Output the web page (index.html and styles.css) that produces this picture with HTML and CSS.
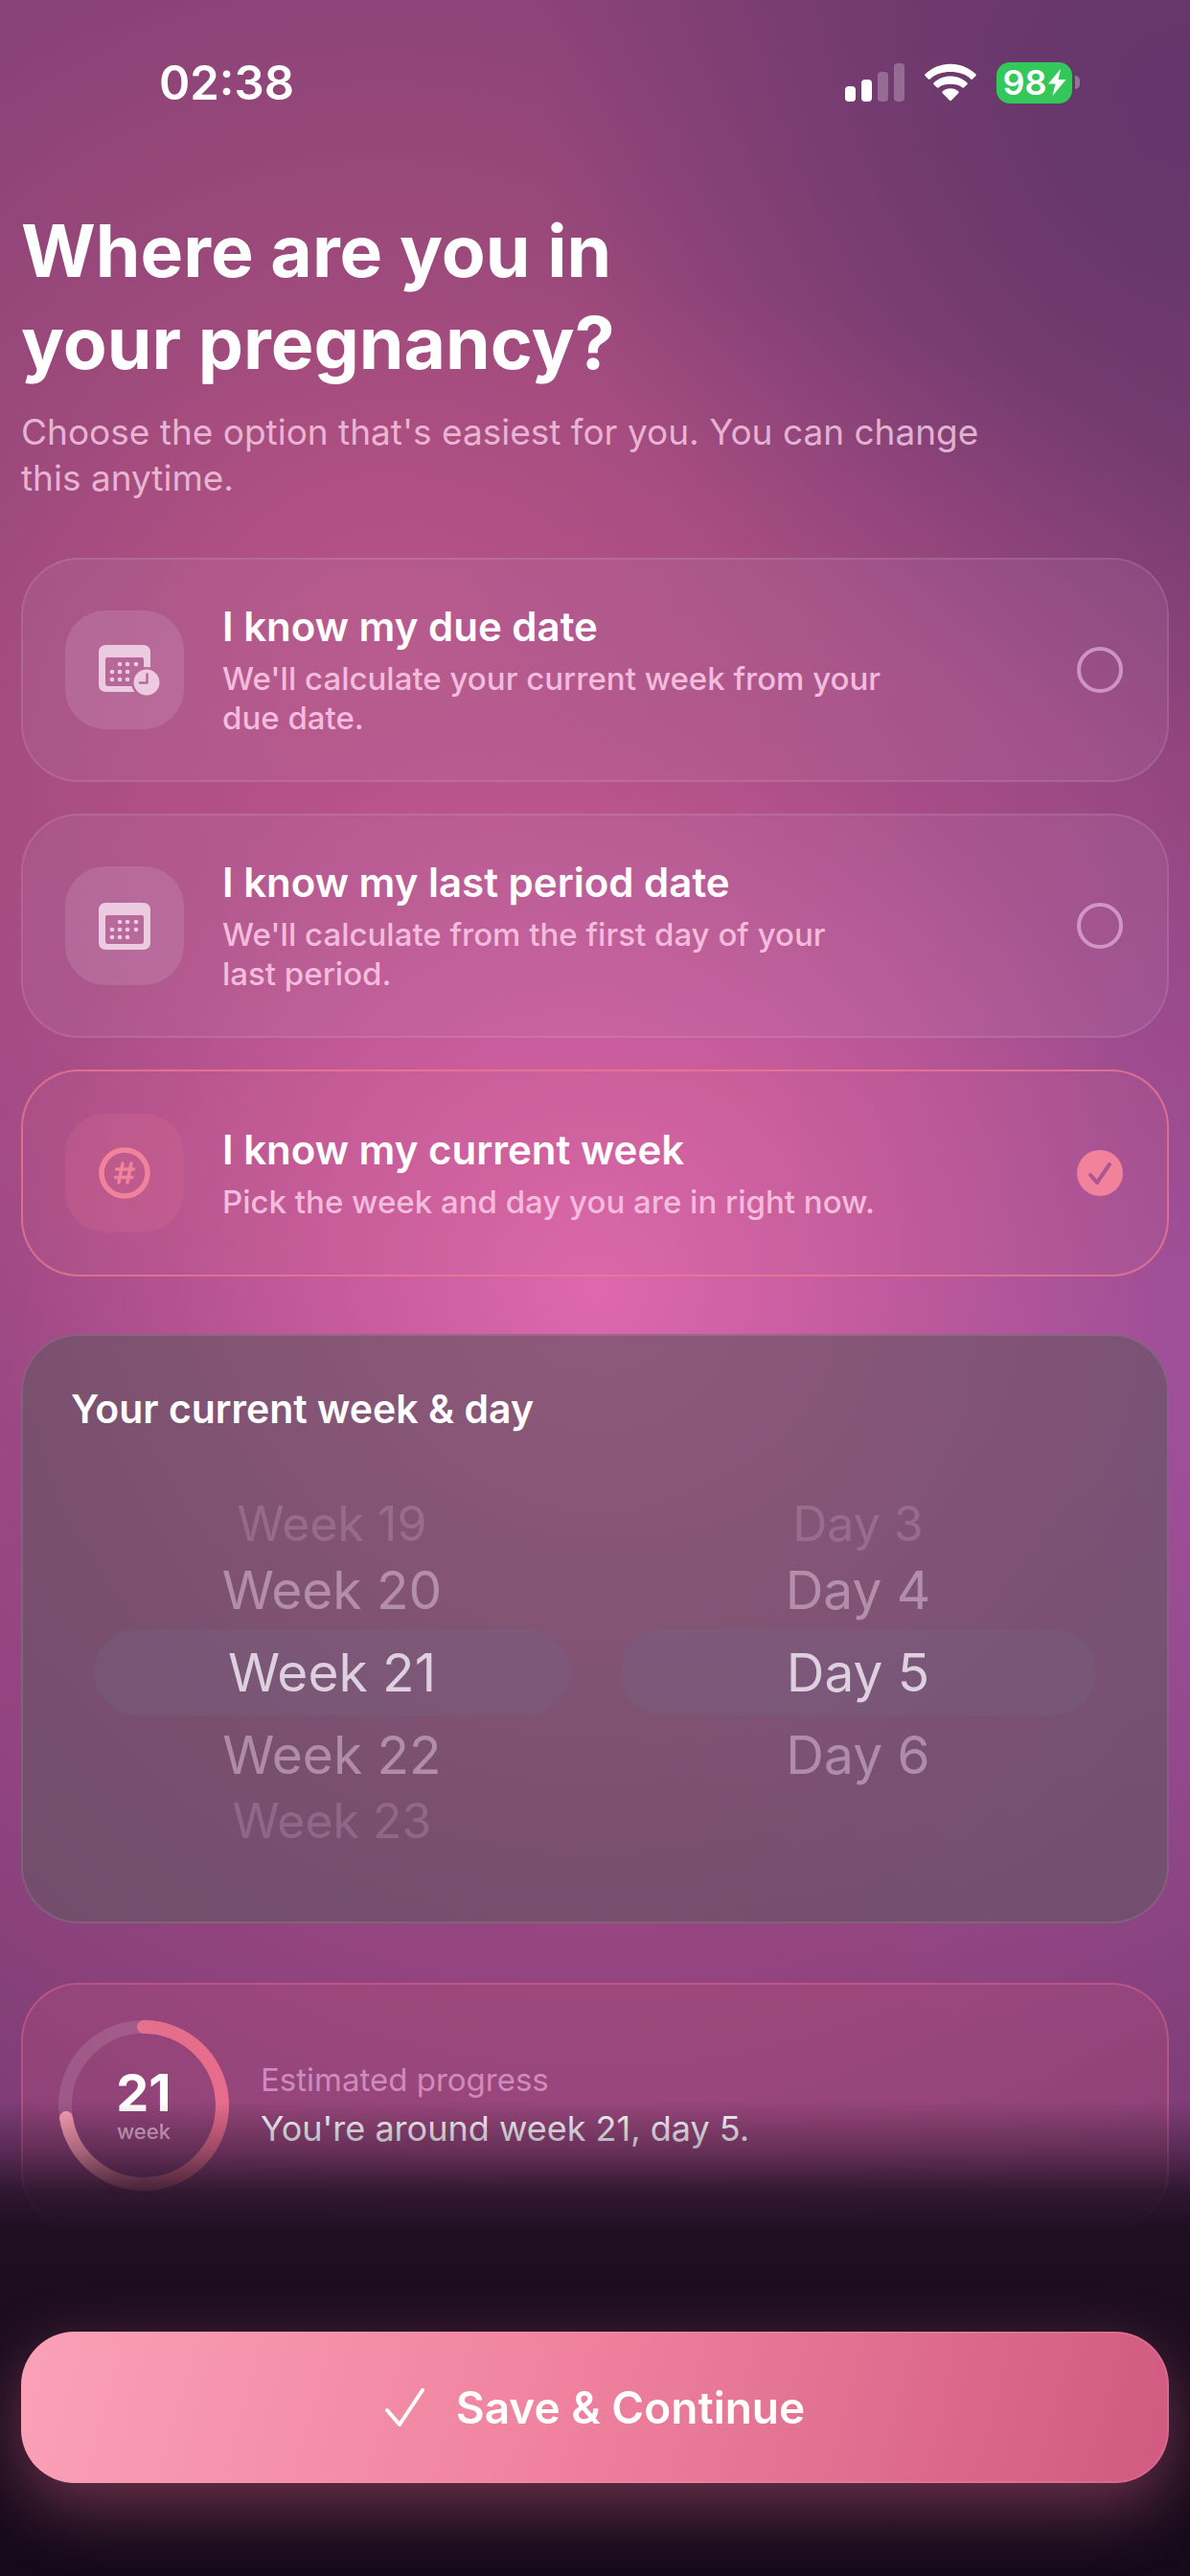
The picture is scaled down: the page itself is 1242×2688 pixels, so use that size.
FILE: index.html
```html
<!DOCTYPE html>
<html lang="en">
<head>
<meta charset="utf-8">
<meta name="viewport" content="width=device-width, initial-scale=1">
<title>Where are you in your pregnancy?</title>
<link rel="stylesheet" href="styles.css">
</head>
<body>
<header class="status">
  <time class="status-time">02:38</time>
  <div class="status-icons">
    <svg class="signal" viewBox="0 0 62 40" aria-hidden="true">
      <rect x="0" y="24" width="11" height="16" rx="4" fill="#fff"/>
      <rect x="17" y="17" width="11" height="23" rx="4" fill="#fff"/>
      <rect x="34" y="9" width="11" height="31" rx="4" fill="#fff" fill-opacity=".25"/>
      <rect x="51" y="0" width="11" height="40" rx="4" fill="#fff" fill-opacity=".25"/>
    </svg>
    <svg class="wifi" viewBox="0 0 56 40" aria-hidden="true" fill="#fff">
      <path d="M28 0C17.400 0 7.800 4.200.7 11Q-.3 12 .7 13L4 16.300Q5 17.200 6 16.300C11.800 10.900 19.500 8.700 28 8.700S44.200 10.900 50 16.300Q51 17.200 52 16.300L55.300 13Q56.300 12 55.300 11C48.200 4.200 38.600 0 28 0Z"/>
      <path d="M28 13.200C21 13.200 14.700 15.900 10 20.300Q9 21.300 10 22.300L13.300 25.500Q14.300 26.400 15.300 25.500C18.700 22.500 23.100 21.800 28 21.800S37.300 22.500 40.700 25.500Q41.700 26.400 42.700 25.500L46 22.300Q47 21.300 46 20.300C41.300 15.900 35 13.200 28 13.200Z"/>
      <path d="M28 26.500C24.700 26.500 21.700 27.700 19.400 29.600Q18.400 30.600 19.400 31.600L27 39.400Q28 40.400 29 39.400L36.600 31.600Q37.600 30.600 36.600 29.600C34.300 27.700 31.300 26.500 28 26.500Z"/>
    </svg>
    <div class="battery">
      <div class="battery-body">
        <span>98</span>
        <svg class="bolt" viewBox="0 0 20 30" aria-hidden="true"><path d="M14 1 1 16.500H8.500L5.500 29 19.500 12H11.500Z" fill="#fff"/></svg>
      </div>
      <span class="battery-tip"></span>
    </div>
  </div>
</header>

<main class="page">
  <h1 class="title">Where are you in<br>your pregnancy?</h1>
  <p class="subtitle">Choose the option that's easiest for you. You can change this anytime.</p>

  <form id="stage" class="options">
    <label class="card option">
      <span class="tile">
        <svg class="icon" viewBox="0 0 54 53" aria-hidden="true">
          <defs>
            <mask id="clock-gap" maskUnits="userSpaceOnUse" x="0" y="0" width="70" height="60">
              <rect width="70" height="60" fill="#fff"/>
              <circle cx="50" cy="39" r="16" fill="#000"/>
            </mask>
            <mask id="clock-hands" maskUnits="userSpaceOnUse" x="0" y="0" width="70" height="60">
              <rect width="70" height="60" fill="#fff"/>
              <path d="M50.500 30.500V39.500H43" fill="none" stroke="#000" stroke-width="2.500" stroke-linecap="round" stroke-linejoin="round"/>
            </mask>
          </defs>
          <g fill="currentColor" mask="url(#clock-gap)">
            <path fill-rule="evenodd" d="M8 0H46Q54 0 54 8V41Q54 49 46 49H8Q0 49 0 41V8Q0 0 8 0ZM9 13Q7 13 7 15V40Q7 43 10 43H44Q47 43 47 40V15Q47 13 45 13Z"/>
            <circle cx="22" cy="20" r="2.300"/><circle cx="30" cy="20" r="2.300"/><circle cx="39" cy="20" r="2.300"/>
            <circle cx="14" cy="28" r="2.300"/><circle cx="22" cy="28" r="2.300"/><circle cx="30" cy="28" r="2.300"/>
            <circle cx="14" cy="36" r="2.300"/><circle cx="22" cy="36" r="2.300"/><circle cx="30" cy="36" r="2.300"/>
          </g>
          <circle cx="50" cy="39" r="13.500" fill="currentColor" mask="url(#clock-hands)"/>
        </svg>
      </span>
      <span class="option-text">
        <span class="option-title">I know my due date</span>
        <span class="option-note">We'll calculate your current week from your<br>due date.</span>
      </span>
      <input class="radio" type="radio" name="stage" value="due">
    </label>

    <label class="card option">
      <span class="tile">
        <svg class="icon" viewBox="0 0 54 49" aria-hidden="true">
          <g fill="currentColor">
            <path fill-rule="evenodd" d="M8 0H46Q54 0 54 8V41Q54 49 46 49H8Q0 49 0 41V8Q0 0 8 0ZM9 13Q7 13 7 15V40Q7 43 10 43H44Q47 43 47 40V15Q47 13 45 13Z"/>
            <circle cx="22" cy="20" r="2.300"/><circle cx="30" cy="20" r="2.300"/><circle cx="39" cy="20" r="2.300"/>
            <circle cx="14" cy="28" r="2.300"/><circle cx="22" cy="28" r="2.300"/><circle cx="30" cy="28" r="2.300"/><circle cx="39" cy="28" r="2.300"/>
            <circle cx="14" cy="36" r="2.300"/><circle cx="22" cy="36" r="2.300"/><circle cx="30" cy="36" r="2.300"/>
          </g>
        </svg>
      </span>
      <span class="option-text">
        <span class="option-title">I know my last period date</span>
        <span class="option-note">We'll calculate from the first day of your<br>last period.</span>
      </span>
      <input class="radio" type="radio" name="stage" value="period">
    </label>

    <label class="card option option-selected">
      <span class="tile">
        <svg class="icon" viewBox="0 0 54 54" aria-hidden="true" fill="none" stroke="currentColor" stroke-linecap="round">
          <circle cx="27" cy="27" r="24" stroke-width="5.500"/>
          <path d="M25 17 21 37M34 17 30 37M18.500 23H36.500M17.500 31.500H35" stroke-width="3.500"/>
        </svg>
      </span>
      <span class="option-text">
        <span class="option-title">I know my current week</span>
        <span class="option-note">Pick the week and day you are in right now.</span>
      </span>
      <input class="radio" type="radio" name="stage" value="week" checked>
    </label>
  </form>

  <section class="card picker">
    <h2 class="picker-title">Your current week &amp; day</h2>
    <div class="wheels">
      <ul class="wheel" role="listbox" aria-label="Week">
        <li class="far" role="option">Week 19</li>
        <li class="near" role="option">Week 20</li>
        <li class="current" role="option" aria-selected="true">Week 21</li>
        <li class="near" role="option">Week 22</li>
        <li class="far" role="option">Week 23</li>
      </ul>
      <ul class="wheel" role="listbox" aria-label="Day">
        <li class="far" role="option">Day 3</li>
        <li class="near" role="option">Day 4</li>
        <li class="current" role="option" aria-selected="true">Day 5</li>
        <li class="near" role="option">Day 6</li>
      </ul>
    </div>
  </section>

  <section class="card progress">
    <div class="ring">
      <svg class="ring-art" viewBox="0 0 180 180" aria-hidden="true" fill="none" stroke-width="14">
        <defs>
          <linearGradient id="arc" x1="0" y1="0" x2="1" y2="0">
            <stop offset="0" stop-color="#ffa0b4"/>
            <stop offset=".5" stop-color="#e2708c"/>
            <stop offset="1" stop-color="#e86c8c"/>
          </linearGradient>
        </defs>
        <circle cx="90" cy="90" r="82" stroke="#fff" stroke-opacity=".12"/>
        <path d="M90 8A82 82 0 1 1 9 103" stroke="url(#arc)" stroke-linecap="round"/>
      </svg>
      <div class="ring-label"><strong>21</strong><span>week</span></div>
    </div>
    <div class="progress-text">
      <p class="progress-caption">Estimated progress</p>
      <p class="progress-value">You're around week 21, day 5.</p>
    </div>
  </section>
</main>

<footer class="footer">
  <button class="save" type="submit" form="stage">
    <svg class="check" viewBox="0 0 42 42" aria-hidden="true"><path d="M2 24 15 39 39 3" fill="none" stroke="#fff" stroke-width="4" stroke-linecap="round" stroke-linejoin="round"/></svg>
    <span>Save &amp; Continue</span>
  </button>
</footer>
</body>
</html>
```
FILE: styles.css
```css
* { box-sizing: border-box; }

body {
  margin: 0;
  min-height: 100vh;
  color: #fff;
  font-family: Inter, "Liberation Sans", sans-serif;
  background:
    radial-gradient(circle at 50% 50%, rgba(226, 106, 176, 0.95) 0, rgba(215, 98, 165, 0.72) 300px, rgba(195, 86, 150, 0.4) 600px, rgba(185, 80, 145, 0) 1050px),
    radial-gradient(circle at 100% 4%, rgba(98, 53, 106, 0.95) 0, rgba(98, 53, 106, 0.75) 180px, rgba(98, 53, 106, 0) 680px),
    radial-gradient(circle at 32% 25%, rgba(186, 84, 130, 0.9) 0, rgba(176, 80, 130, 0) 900px),
    radial-gradient(circle at 100% 54%, rgba(135, 76, 155, 1) 0, rgba(140, 76, 155, 0) 700px),
    linear-gradient(to bottom, #803f74 0, #843f79 50%, #7c3c76 100%);
}

h1, h2, p, ul { margin: 0; padding: 0; }

.status {
  display: flex;
  justify-content: space-between;
  align-items: center;
  height: 172px;
  padding: 0 115px 0 166px;
}
.status-time { font-size: 49px; font-weight: 600; }
.status-icons { display: flex; align-items: center; gap: 21px; }
.signal { width: 62px; height: 40px; }
.wifi { width: 54px; height: 40px; }
.battery { display: flex; align-items: center; gap: 3px; }
.battery-body {
  display: flex;
  align-items: center;
  justify-content: center;
  width: 79px;
  height: 43px;
  border-radius: 14px;
  background: #34c759;
  font-size: 36px;
  font-weight: 600;
}
.bolt { width: 20px; height: 30px; }
.battery-tip { width: 5px; height: 14px; border-radius: 0 6px 6px 0; background: rgba(255, 255, 255, 0.3); }

.page { padding: 42px 22px 360px; }
.title { font-size: 75px; font-weight: 700; line-height: 96px; }
.subtitle {
  max-width: 1040px;
  margin-top: 21px;
  font-size: 37px;
  line-height: 48px;
  color: rgba(255, 215, 238, 0.75);
}

.card {
  border: 2px solid rgba(255, 255, 255, 0.1);
  border-radius: 60px;
}

.options { display: flex; flex-direction: column; gap: 33px; margin-top: 59px; }
.option {
  display: flex;
  align-items: center;
  gap: 40px;
  padding: 44px 46px 44px 44px;
  background: rgba(190, 140, 180, 0.15);
}
.option-selected {
  border-color: rgba(240, 126, 150, 0.7);
  background: rgba(205, 105, 145, 0.15);
}
.tile {
  display: flex;
  flex: none;
  align-items: center;
  justify-content: center;
  width: 124px;
  height: 124px;
  border-radius: 42px;
  background: rgba(205, 155, 195, 0.28);
  color: #eccbe0;
}
.option-selected .tile { background: rgba(230, 115, 145, 0.2); color: #f0829b; }
.icon { flex: none; width: 54px; overflow: visible; }
.option-text { display: flex; flex: 1; flex-direction: column; gap: 8px; }
.option-title { font-size: 42px; font-weight: 600; line-height: 52px; }
.option-note { font-size: 33px; font-weight: 500; line-height: 41px; color: #f3bbdc; }
.radio {
  appearance: none;
  flex: none;
  width: 48px;
  height: 48px;
  margin: 0;
  border: 4px solid rgba(235, 185, 225, 0.65);
  border-radius: 50%;
}
.radio:checked {
  border: 0;
  background: #f0829b url("data:image/svg+xml,%3Csvg xmlns='http://www.w3.org/2000/svg' viewBox='0 0 48 48'%3E%3Cpath d='M14 26 21 34 34 15' fill='none' stroke='%23ac5590' stroke-width='4' stroke-linecap='round' stroke-linejoin='round'/%3E%3C/svg%3E");
}

.picker {
  margin-top: 60px;
  padding: 50px 50px 77px;
  background: rgba(104, 84, 100, 0.67);
}
.picker-title { font-size: 41px; font-weight: 600; line-height: 52px; }
.wheels { display: grid; grid-template-columns: 1fr 1fr; gap: 52px; margin: 66px 24px 0; }
.wheel { list-style: none; text-align: center; }
.wheel li { font-size: 55px; }
.wheel .far { font-size: 50px; line-height: 56px; color: rgba(235, 205, 235, 0.2); }
.wheel .near { line-height: 82px; color: rgba(240, 215, 240, 0.45); }
.wheel .current {
  line-height: 90px;
  border-radius: 45px;
  background: rgba(115, 105, 140, 0.25);
  color: #dfd0df;
}

.progress {
  display: flex;
  align-items: center;
  gap: 32px;
  margin-top: 62px;
  padding: 36px;
  border-color: rgba(232, 110, 150, 0.4);
  background: rgba(205, 90, 120, 0.2);
}
.ring { display: grid; place-items: center; flex: none; }
.ring > * { grid-area: 1 / 1; }
.ring-art { display: block; width: 180px; height: 180px; }
.ring-label { display: flex; flex-direction: column; align-items: center; }
.ring-label strong { font-size: 54px; font-weight: 700; line-height: 54px; }
.ring-label span { font-size: 22px; font-weight: 500; line-height: 26px; color: rgba(255, 215, 240, 0.75); }
.progress-text { display: flex; flex-direction: column; gap: 6px; }
.progress-caption { font-size: 33px; line-height: 42px; color: rgba(240, 180, 225, 0.65); }
.progress-value { font-size: 36px; line-height: 48px; }

.footer {
  position: fixed;
  inset: auto 0 0;
  padding: 240px 22px 97px;
  background: linear-gradient(rgba(22, 11, 28, 0) 0, rgba(22, 11, 28, 0.35) 50px, rgba(26, 13, 31, 0.8) 95px, #1d0e20 140px, #150a1a 100%);
}
.save {
  display: flex;
  align-items: center;
  justify-content: center;
  gap: 32px;
  width: 100%;
  height: 158px;
  border: 0;
  border-radius: 56px;
  background: linear-gradient(105deg, #faa1b7 0, #f083a0 45%, #d05a80 100%);
  box-shadow: 0 24px 70px rgba(240, 110, 150, 0.4), inset 0 0 0 2px rgba(255, 160, 185, 0.2);
  color: #fff;
  font: 600 46px Inter, "Liberation Sans", sans-serif;
}
.check { width: 42px; height: 42px; }
```
